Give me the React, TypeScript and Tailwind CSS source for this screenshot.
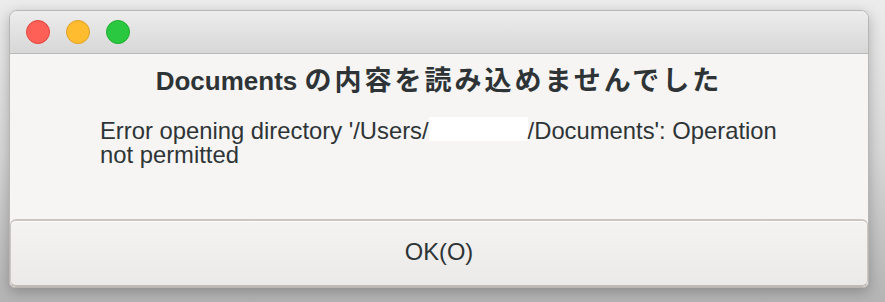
const App = () => {
  return (
    <div className="w-[885px] h-[302px] bg-gradient-to-b from-[#ececec] via-[#d8d8d8] to-[#b4b4b4] pt-[10px] pl-[9px]">
      <div className="w-[860px] h-[278px] flex flex-col rounded-t-[8px] rounded-b-[6px] bg-[#f6f5f4] border border-[#b8b6b3] shadow-[0_4px_14px_rgba(0,0,0,0.25)] overflow-hidden">
        {/* title bar */}
        <div className="h-[43px] shrink-0 flex items-center gap-[16px] pl-[16px] bg-gradient-to-b from-[#ededed] to-[#d7d7d7] border-b border-[#b9b9b9]">
          <span className="w-[24px] h-[24px] rounded-full bg-[#fe5f57] border border-[#e2463f]" />
          <span className="w-[24px] h-[24px] rounded-full bg-[#febc2e] border border-[#e0a028]" />
          <span className="w-[24px] h-[24px] rounded-full bg-[#29c840] border border-[#1fac2f]" />
        </div>

        <div className="flex-1 flex flex-col font-['Liberation_Sans','Noto_Sans_CJK_JP',sans-serif] text-[#2e3436]">
          <h1 className="mt-[12px] text-center text-[26px] font-bold leading-[30px] whitespace-nowrap">
            Documents <span className="text-[27px] tracking-[3px]">の内容を読み込めませんでした</span>
          </h1>
          <p className="mt-[21px] ml-[90px] w-[700px] text-[23.8px] leading-[24px]">
            Error opening directory '/Users/
            <span className="inline-block w-[99px] h-[24px] align-[-2px] bg-white" />
            /Documents': Operation not permitted
          </p>
        </div>

        <button className="h-[68px] shrink-0 rounded-[6px] border-t-2 border-x border-b-2 border-[#cdc7c2] border-b-[#c0bbb6] bg-gradient-to-b from-[#f4f3f2] to-[#ebeae8] shadow-[inset_0_1px_0_#ffffff] font-['Liberation_Sans',sans-serif] text-[23.7px] text-[#2e3436]">
          OK(O)
        </button>
      </div>
    </div>
  );
};

export default App;
